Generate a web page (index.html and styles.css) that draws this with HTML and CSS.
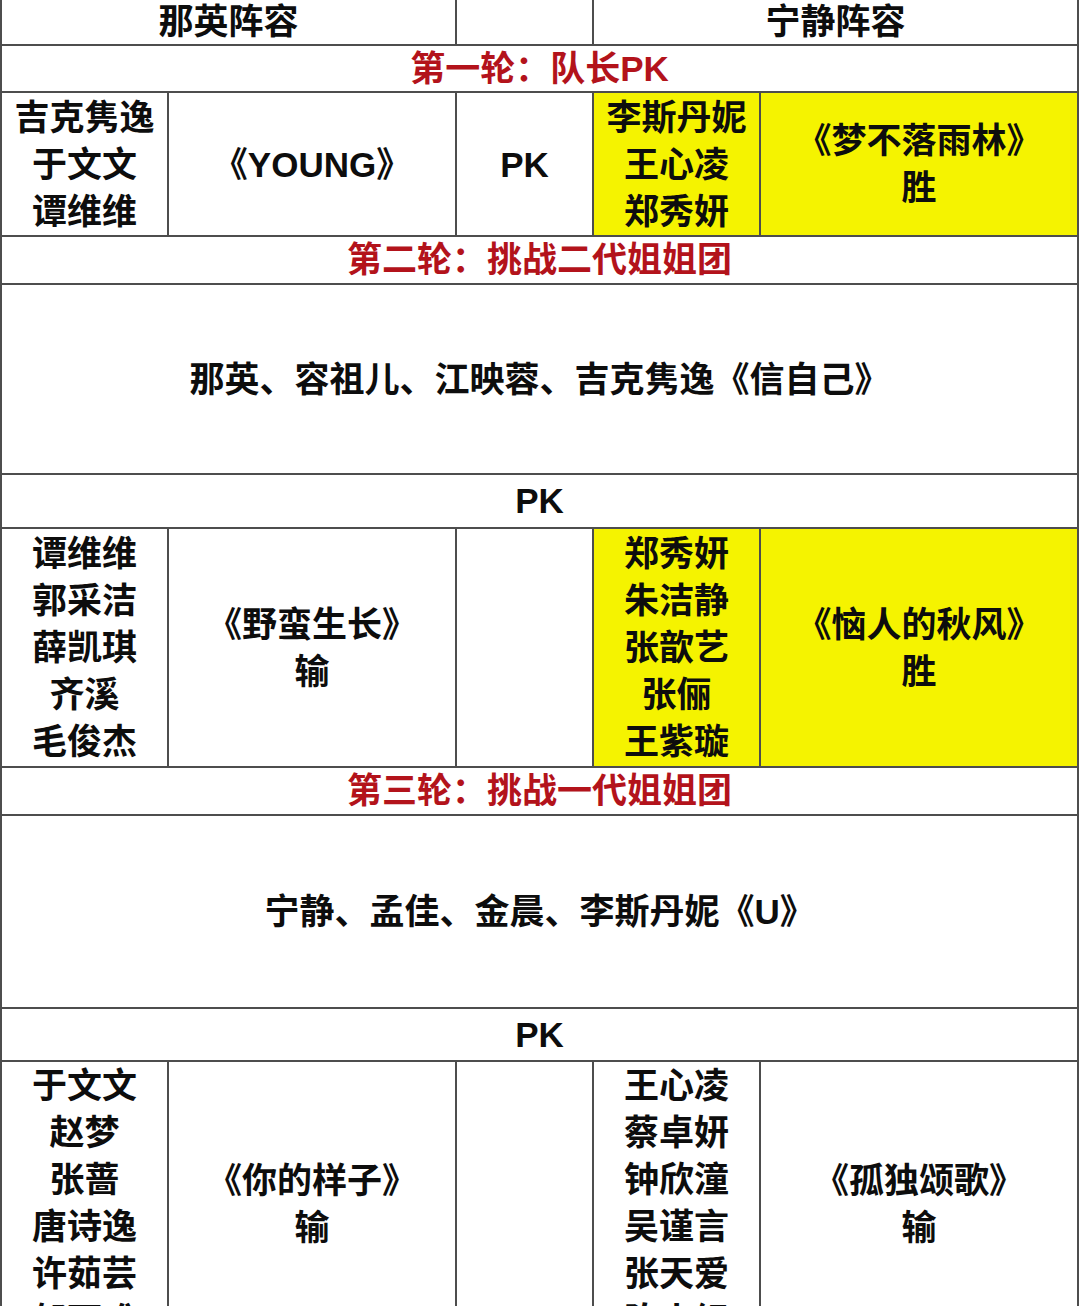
FILE: index.html
```html
<!DOCTYPE html>
<html lang="zh-CN">
<head>
<meta charset="utf-8">
<title>那英阵容 vs 宁静阵容</title>
<link rel="stylesheet" href="styles.css">
</head>
<body>
<table class="board">
  <colgroup>
    <col class="c-names">
    <col class="c-song">
    <col class="c-mid">
    <col class="c-names">
    <col class="c-song-r">
  </colgroup>
  <tbody>
    <tr class="r-head">
      <td colspan="2">那英阵容</td>
      <td></td>
      <td colspan="2">宁静阵容</td>
    </tr>
    <tr class="r-title r-title-first">
      <td colspan="5" class="red">第一轮：队长PK</td>
    </tr>
    <tr class="r-data1">
      <td class="names">吉克隽逸<br>于文文<br>谭维维</td>
      <td class="song">《YOUNG》</td>
      <td class="pk">PK</td>
      <td class="names yellow">李斯丹妮<br>王心凌<br>郑秀妍</td>
      <td class="song yellow">《梦不落雨林》<br>胜</td>
    </tr>
    <tr class="r-title">
      <td colspan="5" class="red">第二轮：挑战二代姐姐团</td>
    </tr>
    <tr class="r-big1">
      <td colspan="5" class="big">那英、容祖儿、江映蓉、吉克隽逸《信自己》</td>
    </tr>
    <tr class="r-pk1">
      <td colspan="5" class="pk">PK</td>
    </tr>
    <tr class="r-data2">
      <td class="names">谭维维<br>郭采洁<br>薛凯琪<br>齐溪<br>毛俊杰</td>
      <td class="song">《野蛮生长》<br>输</td>
      <td></td>
      <td class="names yellow">郑秀妍<br>朱洁静<br>张歆艺<br>张俪<br>王紫璇</td>
      <td class="song yellow">《恼人的秋风》<br>胜</td>
    </tr>
    <tr class="r-title">
      <td colspan="5" class="red">第三轮：挑战一代姐姐团</td>
    </tr>
    <tr class="r-big2">
      <td colspan="5" class="big">宁静、孟佳、金晨、李斯丹妮《U》</td>
    </tr>
    <tr class="r-pk2">
      <td colspan="5" class="pk">PK</td>
    </tr>
    <tr class="r-data3">
      <td class="names">于文文<br>赵梦<br>张蔷<br>唐诗逸<br>许茹芸<br>郁可唯</td>
      <td class="song">《你的样子》<br>输</td>
      <td></td>
      <td class="names">王心凌<br>蔡卓妍<br>钟欣潼<br>吴谨言<br>张天爱<br>陈小纭</td>
      <td class="song">《孤独颂歌》<br>输</td>
    </tr>
  </tbody>
</table>
</body>
</html>
```

FILE: styles.css
```css
html, body {
  margin: 0;
  padding: 0;
  background: #ffffff;
}

body {
  width: 1080px;
  height: 1306px;
  overflow: hidden;
}

.board {
  border-collapse: collapse;
  table-layout: fixed;
  width: 1079px;
  font-family: "Liberation Sans", "Noto Sans CJK SC", sans-serif;
  font-weight: 700;
  font-size: 35px;
  line-height: 47px;
  color: #0d0d0d;
}

.c-names { width: 167px; }
.c-song { width: 288px; }
.c-mid { width: 137px; }
.c-song-r { width: 318px; }

.board td {
  border: 2px solid #4d4d4d;
  padding: 0;
  text-align: center;
  vertical-align: middle;
  overflow: hidden;
  white-space: nowrap;
}

.r-head td {
  border-top: none;
  line-height: 40px;
}

.r-head { height: 45px; }
.r-title td { line-height: 40px; }
.r-title { height: 48px; }
.r-title-first { height: 47px; }
.r-data1 { height: 144px; }
.r-big1 { height: 190px; }
.r-pk1 { height: 54px; }
.r-pk1 td, .r-pk2 td { line-height: 44px; }
.r-data2 { height: 239px; }
.r-big2 { height: 193px; }
.r-pk2 { height: 53px; }
.r-data3 { height: 286px; }

.red {
  color: #b3131b;
}

.yellow {
  background: #f5f300;
}

.big {
  font-size: 35px;
}

.r-data3 td.names {
  vertical-align: top;
}
```
